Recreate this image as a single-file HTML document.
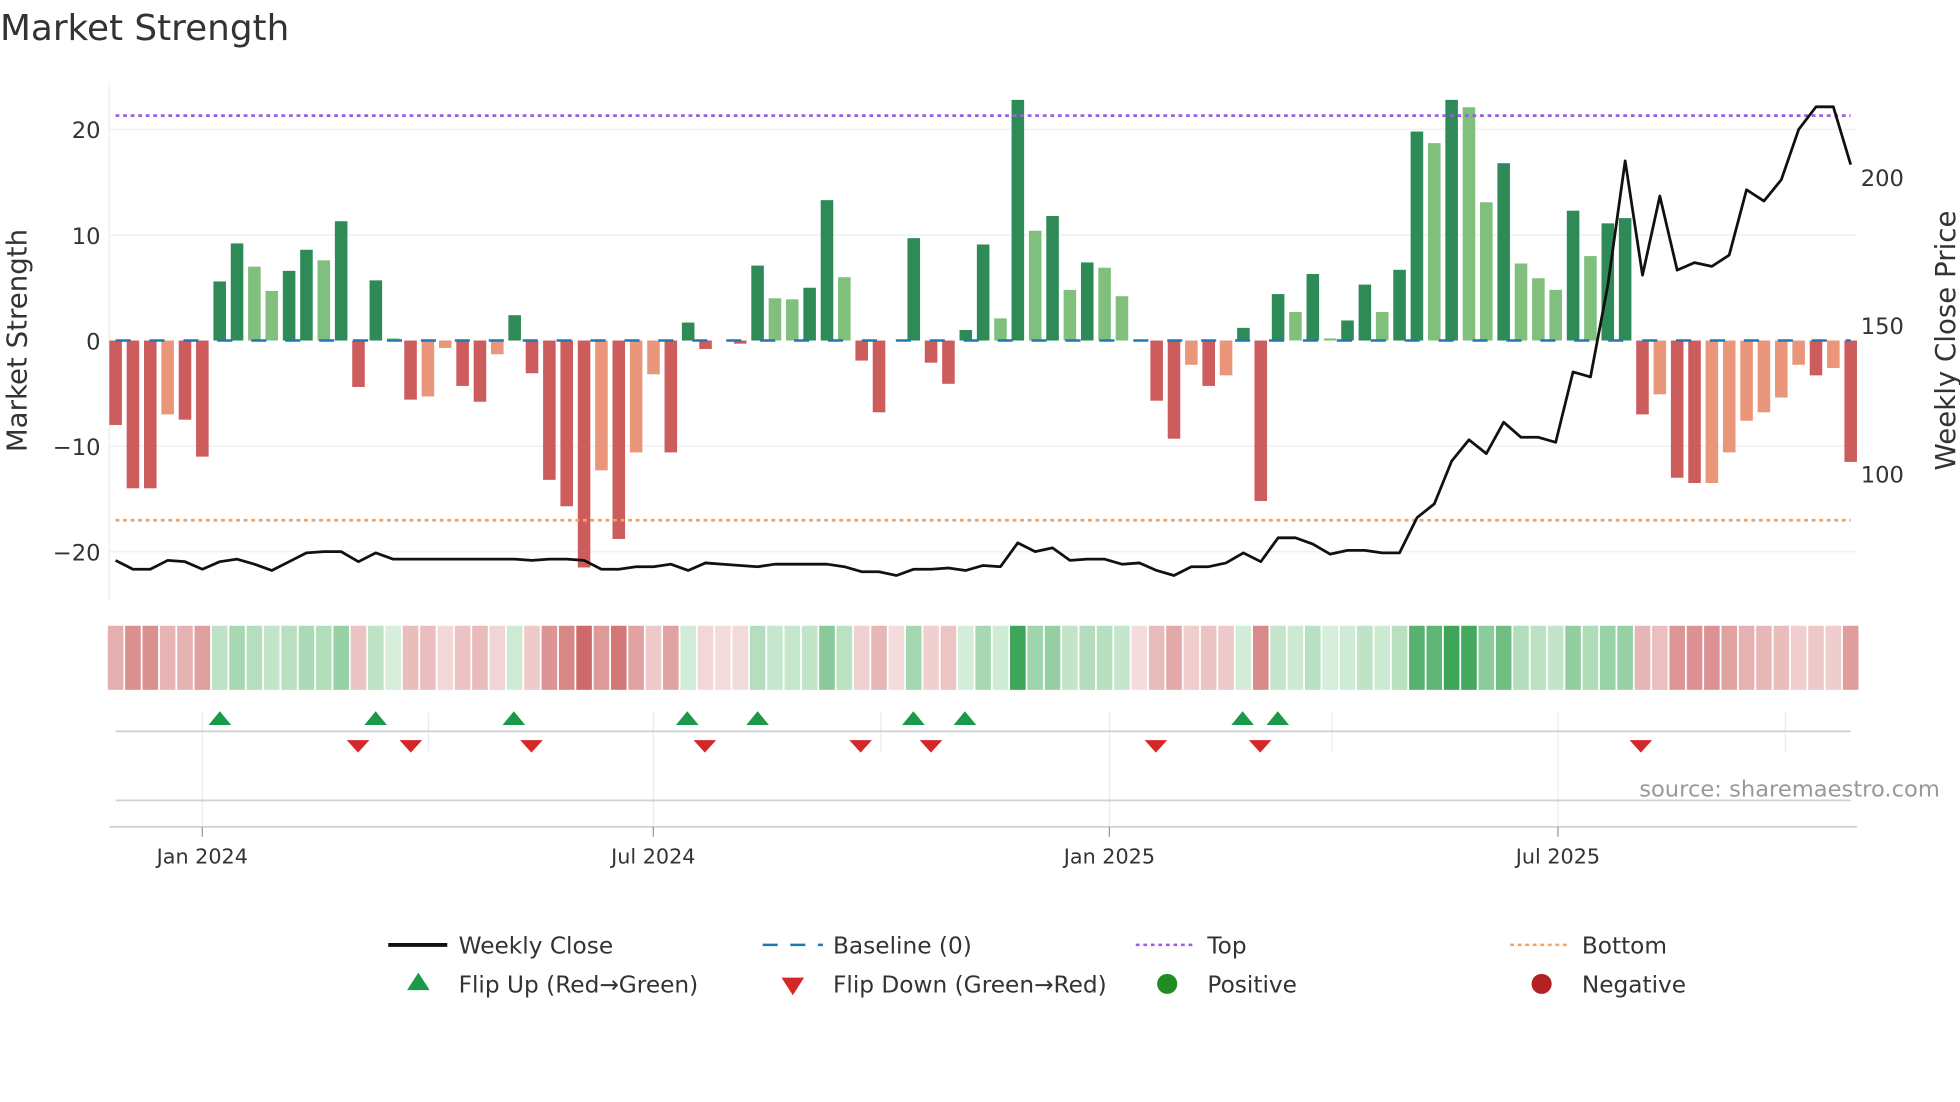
<!DOCTYPE html>
<html><head><meta charset="utf-8"><style>
html,body{margin:0;padding:0;background:#fff;width:1960px;height:1102px;overflow:hidden}
svg{display:block}
text{font-family:"DejaVu Sans","Liberation Sans",sans-serif;fill:#333}
</style></head><body>
<svg id="s" width="1960" height="1102" viewBox="0 0 1560 877" preserveAspectRatio="none">
<text x="0" y="32" font-size="28.5" fill="#333">Market Strength</text>
<g stroke="#eef0f4" stroke-width="1.2">
<line x1="87" x2="1478" y1="103" y2="103"/><line x1="87" x2="1478" y1="187" y2="187"/>
<line x1="87" x2="1478" y1="355" y2="355"/><line x1="87" x2="1478" y1="439" y2="439"/>
<line x1="87" x2="87" y1="65" y2="478"/>
</g>
<g font-size="18" text-anchor="end">
<text x="80" y="110">20</text><text x="80" y="194">10</text><text x="80" y="278">0</text>
<text x="80" y="362">−10</text><text x="80" y="446">−20</text>
</g>
<g font-size="18">
<text x="1481" y="148">200</text><text x="1481" y="266">150</text><text x="1481" y="384">100</text>
</g>
<text transform="translate(21,271) rotate(-90)" font-size="22" text-anchor="middle">Market Strength</text>
<text transform="translate(1556,271) rotate(-90)" font-size="22" text-anchor="middle">Weekly Close Price</text>
<g id="bars"></g>
<line x1="92" x2="1473" y1="271" y2="271" stroke="#1f77b4" stroke-width="2" stroke-dasharray="12,15"/>
<line x1="92" x2="1473" y1="92" y2="92" stroke="#9b5fe0" stroke-width="2.2" stroke-dasharray="3,3"/>
<line x1="92" x2="1473" y1="414" y2="414" stroke="#f4a261" stroke-width="2.2" stroke-dasharray="3,3"/>
<polyline id="price" fill="none" stroke="#111" stroke-width="2.2" stroke-linejoin="round"/>
<g id="heat"></g>
<g stroke="#e8ecf2" stroke-width="1">
<line x1="161" x2="161" y1="567" y2="660"/><line x1="341" x2="341" y1="567" y2="598"/>
<line x1="520" x2="520" y1="567" y2="660"/><line x1="701" x2="701" y1="567" y2="598"/>
<line x1="883" x2="883" y1="567" y2="660"/><line x1="1060" x2="1060" y1="567" y2="598"/>
<line x1="1240" x2="1240" y1="567" y2="660"/><line x1="1421" x2="1421" y1="567" y2="598"/>
</g>
<line x1="92" x2="1473" y1="582" y2="582" stroke="#d0d3d6" stroke-width="1.5"/>
<line x1="92" x2="1473" y1="637" y2="637" stroke="#d0d3d6" stroke-width="1.5"/>
<line x1="87" x2="1478" y1="658" y2="658" stroke="#d0d3d6" stroke-width="1.5"/>
<g stroke="#999" stroke-width="1"><line x1="161" x2="161" y1="658" y2="666"/><line x1="520" x2="520" y1="658" y2="666"/><line x1="883" x2="883" y1="658" y2="666"/><line x1="1240" x2="1240" y1="658" y2="666"/></g>
<g id="marks"></g>
<text x="1544" y="634" font-size="18" text-anchor="end" style="fill:#999">source: sharemaestro.com</text>
<g font-size="16.5" text-anchor="middle">
<text x="161" y="687">Jan 2024</text><text x="520" y="687">Jul 2024</text>
<text x="883" y="687">Jan 2025</text><text x="1240" y="687">Jul 2025</text>
</g>
<g font-size="18.5">
<line x1="309" x2="356" y1="752" y2="752" stroke="#111" stroke-width="3"/>
<text x="365" y="759">Weekly Close</text>
<line x1="607" x2="655" y1="752" y2="752" stroke="#1f77b4" stroke-width="2" stroke-dasharray="12,10"/>
<text x="663" y="759">Baseline (0)</text>
<line x1="904" x2="950" y1="752" y2="752" stroke="#9b5fe0" stroke-width="2" stroke-dasharray="3,3"/>
<text x="961" y="759">Top</text>
<line x1="1202" x2="1248" y1="752" y2="752" stroke="#f4a261" stroke-width="2" stroke-dasharray="3,3"/>
<text x="1259" y="759">Bottom</text>
<polygon points="324,788 342,788 333,774" fill="#1a9a48"/>
<text x="365" y="790">Flip Up (Red→Green)</text>
<polygon points="622,778 640,778 631,792" fill="#d62728"/>
<text x="663" y="790">Flip Down (Green→Red)</text>
<circle cx="929" cy="783" r="8" fill="#228b22"/>
<text x="961" y="790">Positive</text>
<circle cx="1227" cy="783" r="8" fill="#b22222"/>
<text x="1259" y="790">Negative</text>
</g>
</svg>
<script>
var v=[[-8,'r'],[-14,'r'],[-14,'r'],[-7,'s'],[-7.5,'r'],[-11,'r'],[5.6,'d'],[9.2,'d'],[7,'l'],[4.7,'l'],[6.6,'d'],[8.6,'d'],[7.6,'l'],[11.3,'d'],[-4.4,'r'],[5.7,'d'],[0.2,'l'],[-5.6,'r'],[-5.3,'s'],[-0.7,'s'],[-4.3,'r'],[-5.8,'r'],[-1.3,'s'],[2.4,'d'],[-3.1,'r'],[-13.2,'r'],[-15.7,'r'],[-21.5,'r'],[-12.3,'s'],[-18.8,'r'],[-10.6,'s'],[-3.2,'s'],[-10.6,'r'],[1.7,'d'],[-0.8,'r'],[0,'r'],[-0.3,'r'],[7.1,'d'],[4,'l'],[3.9,'l'],[5,'d'],[13.3,'d'],[6,'l'],[-1.9,'r'],[-6.8,'r'],[0,'r'],[9.7,'d'],[-2.1,'r'],[-4.1,'r'],[1,'d'],[9.1,'d'],[2.1,'l'],[22.8,'d'],[10.4,'l'],[11.8,'d'],[4.8,'l'],[7.4,'d'],[6.9,'l'],[4.2,'l'],[0,'r'],[-5.7,'r'],[-9.3,'r'],[-2.3,'s'],[-4.3,'r'],[-3.3,'s'],[1.2,'d'],[-15.2,'r'],[4.4,'d'],[2.7,'l'],[6.3,'d'],[0.2,'l'],[1.9,'d'],[5.3,'d'],[2.7,'l'],[6.7,'d'],[19.8,'d'],[18.7,'l'],[22.8,'d'],[22.1,'l'],[13.1,'l'],[16.8,'d'],[7.3,'l'],[5.9,'l'],[4.8,'l'],[12.3,'d'],[8,'l'],[11.1,'d'],[11.6,'d'],[-7,'r'],[-5.1,'s'],[-13,'r'],[-13.5,'r'],[-13.5,'s'],[-10.6,'s'],[-7.6,'s'],[-6.8,'s'],[-5.4,'s'],[-2.3,'s'],[-3.3,'r'],[-2.6,'s'],[-11.5,'r']];
var col={d:'#2e8b57',l:'#80bf7c',r:'#cd5c5c',s:'#e9967a'};
var ns='http://www.w3.org/2000/svg';
function el(t,a,p){var e=document.createElementNS(ns,t);for(var k in a)e.setAttribute(k,a[k]);document.getElementById(p).appendChild(e);}
function mix(a,b,t){var r=[0,1,2].map(function(i){return Math.round(a[i]+(b[i]-a[i])*t)});return 'rgb('+r.join(',')+')';}
var step=13.81;
v.forEach(function(b,i){var x=92+step*i,h=b[0]*8.4;
 if(b[0]!==0){el('rect',{x:x-5,y:h>0?271-h:271,width:10,height:Math.abs(h),fill:col[b[1]]},'bars');}
 var t=Math.min(1,Math.abs(b[0])/23);var c;
 if(b[0]>0)c=mix([214,238,218],[60,165,88],Math.pow(t,1.3));else c=mix([244,220,220],[204,98,98],Math.pow(t,0.95));
 el('rect',{x:x-6.2,y:498,width:12.4,height:51,fill:c},'heat');});
var p=[446,453,453,446,447,453,447,445,449,454,447,440,439,439,447,440,445,445,445,445,445,445,445,445,446,445,445,446,453,453,451,451,449,454,448,449,450,451,449,449,449,449,451,455,455,458,453,453,452,454,452,450,451,432,439,436,446,445,445,449,448,454,458,451,451,448,440,447,428,428,433,441,438,438,440,440,412,401,367,350,361,336,348,348,352,296,300,227,128,219,156,215,209,212,203,151,160,143,103,85,85,131];
var pts=[];for(var i=0;i<101;i++){var y=p[Math.min(p.length-1,Math.round(i*(p.length-1)/100))];pts.push((92+step*i).toFixed(1)+','+y);}
document.getElementById('price').setAttribute('points',pts.join(' '));
[175,299,409,547,603,727,768,989,1017].forEach(function(x){el('polygon',{points:(x-9)+',577 '+(x+9)+',577 '+x+',566',fill:'#1a9a48'},'marks');});
[285,327,423,561,685,741,920,1003,1306].forEach(function(x){el('polygon',{points:(x-9)+',589 '+(x+9)+',589 '+x+',599',fill:'#d62728'},'marks');});
</script>
</body></html>
